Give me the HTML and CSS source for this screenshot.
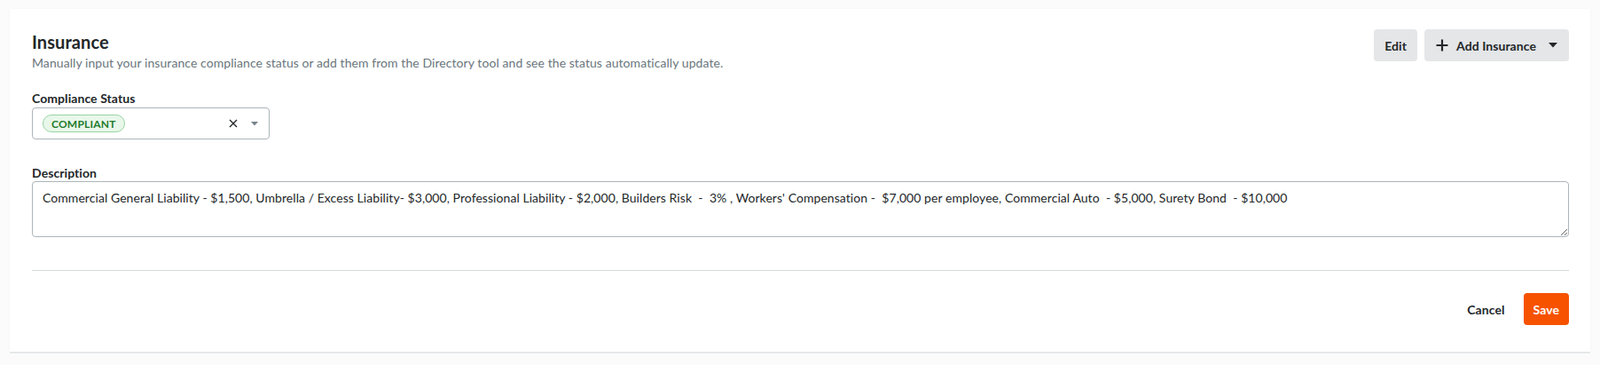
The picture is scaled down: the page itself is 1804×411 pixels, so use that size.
FILE: index.html
```html
<!DOCTYPE html>
<html lang="en">
<head>
<meta charset="utf-8">
<title>Insurance</title>
<link rel="stylesheet" href="styles.css">
</head>
<body>
<div class="page">
  <section class="card">
    <header class="card-header">
      <div class="titles">
        <h2 class="title">Insurance</h2>
        <p class="subtitle">Manually input your insurance compliance status or add them from the Directory tool and see the status automatically update.</p>
      </div>
      <div class="actions">
        <button class="btn btn-secondary btn-edit">Edit</button>
        <button class="btn btn-secondary btn-add">
          <svg class="icon-plus" width="16" height="16" viewBox="0 0 16 16"><path d="M8 1.5v13M1.5 8h13" stroke="#232729" stroke-width="2.2" fill="none"/></svg>
          <span>Add Insurance</span>
          <svg class="icon-caret" width="10" height="6" viewBox="0 0 10 6"><path d="M0 0h10L5 5.5z" fill="#232729"/></svg>
        </button>
      </div>
    </header>

    <div class="field field-status">
      <label class="label">Compliance Status</label>
      <div class="select">
        <span class="pill">COMPLIANT</span>
        <span class="select-controls">
          <svg class="icon-x" width="10" height="10" viewBox="0 0 10 10"><path d="M1 1l8 8M9 1l-8 8" stroke="#232729" stroke-width="1.4" fill="none"/></svg>
          <svg class="icon-caret-sm" width="8" height="5" viewBox="0 0 8 5"><path d="M0 0h8L4 4.5z" fill="#75838a"/></svg>
        </span>
      </div>
    </div>

    <div class="field field-desc">
      <label class="label label-desc">Description</label>
      <textarea class="textarea">Commercial General Liability - $1,500, Umbrella / Excess Liability- $3,000, Professional Liability - $2,000, Builders Risk  -  3% , Workers' Compensation -  $7,000 per employee, Commercial Auto  - $5,000, Surety Bond  - $10,000</textarea>
    </div>

    <footer class="card-footer">
      <button class="btn btn-tertiary">Cancel</button>
      <button class="btn btn-primary">Save</button>
    </footer>
  </section>
</div>
</body>
</html>
```

FILE: styles.css
```css
* { box-sizing: border-box; }

html, body {
  margin: 0;
  padding: 0;
  background: #fbfbfb;
  font-family: Lato, "Liberation Sans", sans-serif;
  color: #232729;
  letter-spacing: 0.07px;
}

.page {
  padding: 10px 11px 12px 11px;
}

.card {
  background: #ffffff;
  padding: 23px 24px 30px 25px;
  box-shadow: 0 2px 0 #e6e8e9, 0 0 2px rgba(0, 0, 0, 0.04);
}

.card-header {
  display: flex;
  justify-content: space-between;
  align-items: flex-start;
}

.titles {
  padding-top: 1px;
}

.title {
  margin: 0;
  font-size: 20px;
  line-height: 27px;
  font-weight: 700;
  color: #232729;
}

.subtitle {
  margin: 0;
  font-size: 14px;
  line-height: 20px;
  color: #6a767c;
}

.actions {
  display: flex;
  gap: 8px;
}

.btn {
  font-family: Lato, "Liberation Sans", sans-serif;
  font-size: 14px;
  font-weight: 700;
  letter-spacing: 0.07px;
  height: 36px;
  border: none;
  border-radius: 4px;
  display: inline-flex;
  align-items: center;
  cursor: pointer;
  color: #232729;
}

.btn-secondary {
  background: #e4e6e8;
  padding: 0 12px;
}

.btn-add {
  padding: 0 13px 0 12px;
}

.icon-plus { margin-right: 8px; }
.icon-caret { margin-left: 14px; }

.field-status {
  margin-top: 20px;
}

.label {
  display: block;
  font-size: 14px;
  line-height: 20px;
  font-weight: 700;
  margin-bottom: 0;
}

.select {
  width: 268px;
  height: 36px;
  border: 1px solid #acb5b9;
  border-radius: 4px;
  display: flex;
  align-items: center;
  justify-content: space-between;
  padding: 0 12px 0 11px;
}

.pill {
  display: inline-flex;
  align-items: center;
  height: 20px;
  padding: 0 9px;
  border: 1px solid #98d5a1;
  border-radius: 10px;
  background: #e8f7ea;
  color: #1f7a2e;
  font-size: 12px;
  font-weight: 700;
  letter-spacing: 0.2px;
}

.select-controls {
  display: flex;
  align-items: center;
  gap: 15px;
}

.field-desc {
  margin-top: 29px;
}

.label-desc {
  line-height: 18px;
}

.textarea {
  display: block;
  width: 100%;
  height: 63px;
  border: 1px solid #acb5b9;
  border-radius: 4px;
  padding: 8px 11px;
  font-family: Lato, "Liberation Sans", sans-serif;
  font-size: 14px;
  line-height: 20px;
  letter-spacing: 0.06px;
  color: #232729;
  resize: vertical;
  margin: 0;
}

.card-footer {
  margin-top: 37px;
  border-top: 1px solid #d6dadc;
  padding-top: 25px;
  display: flex;
  justify-content: flex-end;
  gap: 9px;
}

.btn-tertiary {
  background: transparent;
  padding: 0 12px;
}

.btn-primary {
  background: #f65200;
  color: #ffffff;
  padding: 0 11px;
}
```
